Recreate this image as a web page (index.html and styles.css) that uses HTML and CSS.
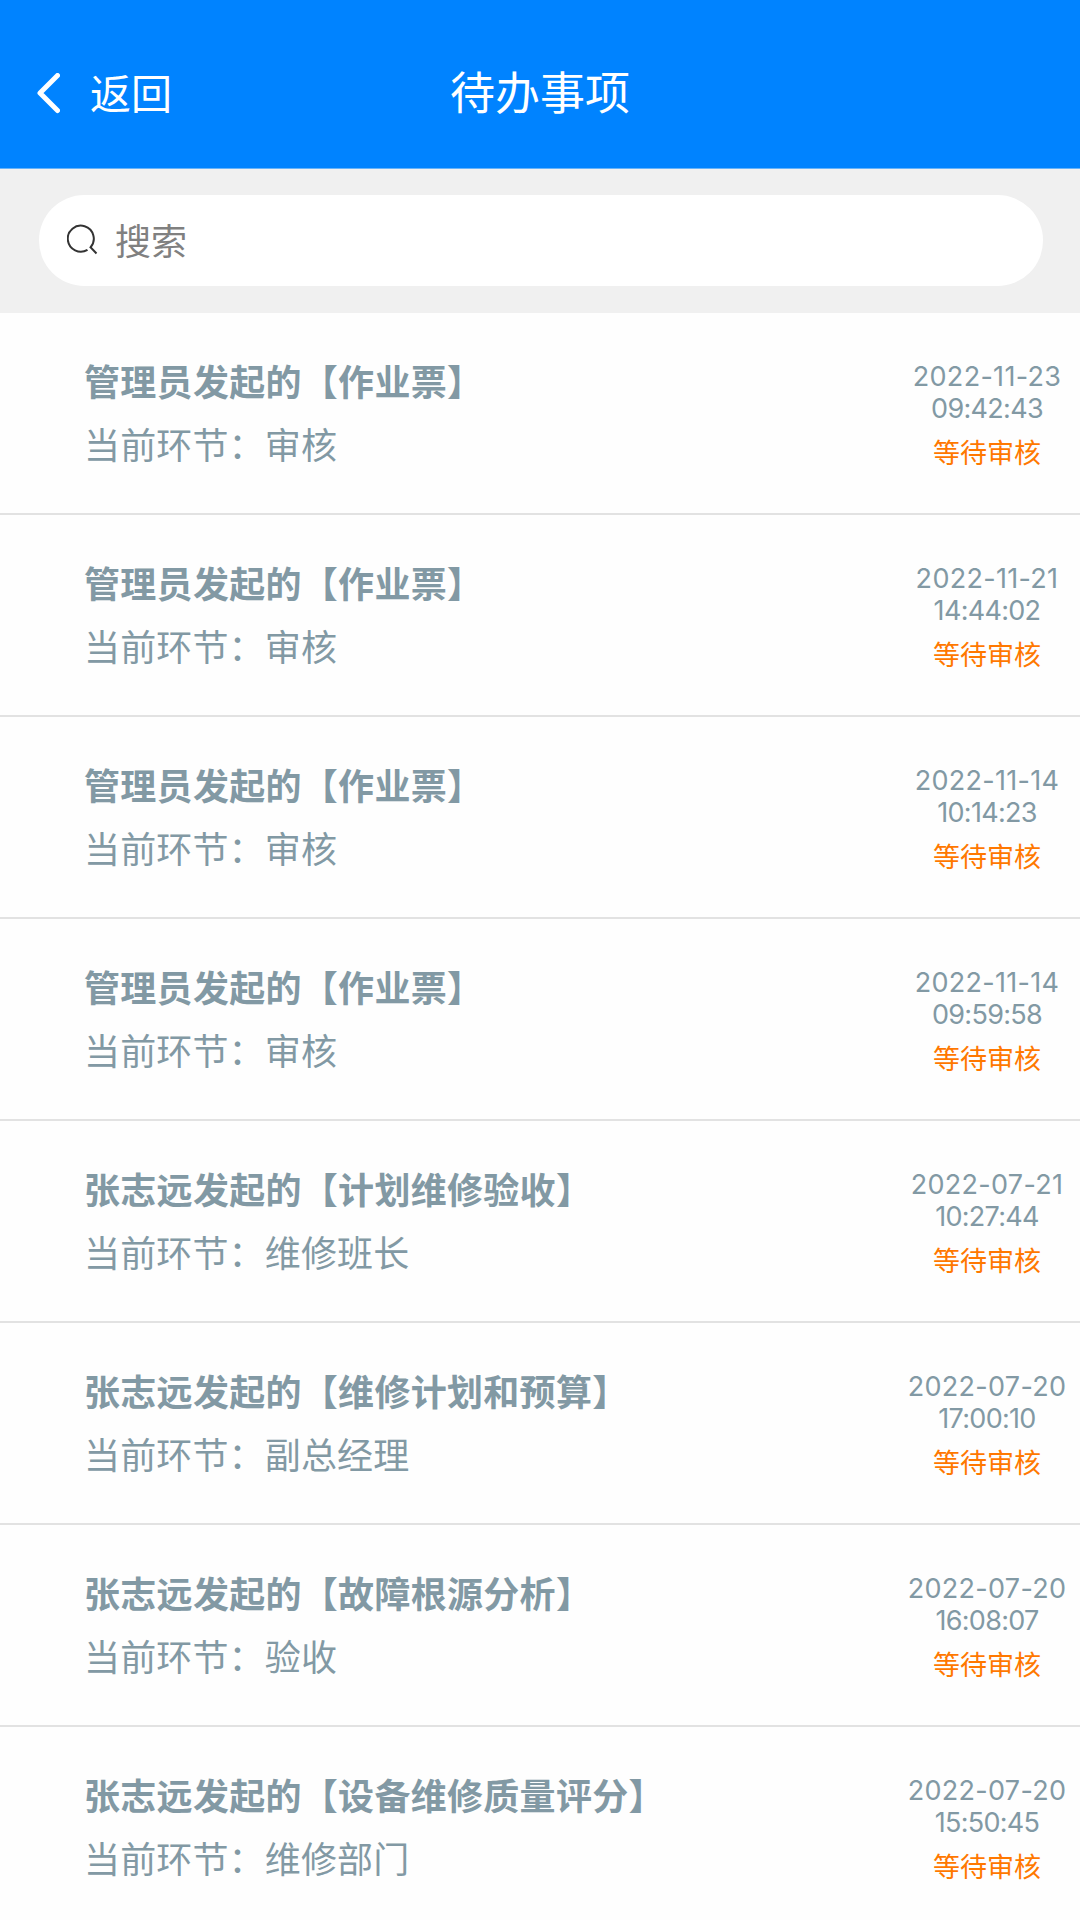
FILE: index.html
```
<!DOCTYPE html>
<html lang="zh-CN">
	<head>
		<meta charset="UTF-8" />
		<meta name="viewport" content="width=device-width, initial-scale=1.0" />
		<title>待办事项</title>
		<link rel="stylesheet" href="styles.css">
	</head>
	<body>
		<header class="navbar">
			<a class="back">
				<svg class="back-icon" width="24" height="42" viewBox="0 0 24 42">
					<path d="M21.5 2.5 L4 20 L21.5 37.5" />
				</svg>
				<span>返回</span>
			</a>
			<h1>待办事项</h1>
		</header>

		<div class="search-bar">
			<div class="search-box">
				<svg class="search-icon" width="32" height="32" viewBox="0 0 32 32">
					<path d="M20.5 26.8 A13 13 0 1 1 23.5 24.3 L29.5 30.5" />
				</svg>
				<span>搜索</span>
			</div>
		</div>

		<ul class="todo-list" id="todo-list"></ul>

		<script>
			const todoList = document.getElementById("todo-list");

			const todos = [
				{ user: "管理员", form: "作业票", step: "审核", date: "2022-11-23", time: "09:42:43" },
				{ user: "管理员", form: "作业票", step: "审核", date: "2022-11-21", time: "14:44:02" },
				{ user: "管理员", form: "作业票", step: "审核", date: "2022-11-14", time: "10:14:23" },
				{ user: "管理员", form: "作业票", step: "审核", date: "2022-11-14", time: "09:59:58" },
				{ user: "张志远", form: "计划维修验收", step: "维修班长", date: "2022-07-21", time: "10:27:44" },
				{ user: "张志远", form: "维修计划和预算", step: "副总经理", date: "2022-07-20", time: "17:00:10" },
				{ user: "张志远", form: "故障根源分析", step: "验收", date: "2022-07-20", time: "16:08:07" },
				{ user: "张志远", form: "设备维修质量评分", step: "维修部门", date: "2022-07-20", time: "15:50:45" },
			];

			todos.forEach((todo) => {
				const item = document.createElement("li");
				item.classList.add("todo");
				item.innerHTML = `
					<div class="info">
						<div class="title">${todo.user}发起的【${todo.form}】</div>
						<div class="step">当前环节：${todo.step}</div>
					</div>
					<div class="meta">
						<div class="date">${todo.date}</div>
						<div class="time">${todo.time}</div>
						<div class="status">等待审核</div>
					</div>`;
				todoList.appendChild(item);
			});
		</script>
	</body>
</html>
```
FILE: styles.css
```
* {
	box-sizing: border-box;
}

body {
	font-family: Inter, "Noto Sans CJK SC", sans-serif;
	background-color: #fefefe;
	color: #8299a4;
	height: 1920px;
	margin: 0;
	overflow: hidden;
}

.navbar {
	display: grid;
	grid-template-columns: 1fr auto 1fr;
	align-items: center;
	height: 169px;
	padding: 19px 36px 0;
	background-color: #0083ff;
	border-bottom: 1px solid #66b3fa;
	color: white;
}

.navbar h1 {
	margin: 0;
	font-size: 45px;
	font-weight: 400;
	line-height: 60px;
}

.back {
	display: flex;
	align-items: center;
	gap: 30px;
	font-size: 41px;
	line-height: 60px;
}

.back-icon {
	fill: none;
	stroke: white;
	stroke-width: 5;
	stroke-linecap: round;
	stroke-linejoin: round;
}

.search-bar {
	height: 144px;
	padding: 26px 37px 27px 39px;
	background-color: #f0f0f0;
}

.search-box {
	display: flex;
	align-items: center;
	gap: 16px;
	height: 91px;
	padding: 0 0 3px 28px;
	background-color: white;
	border-radius: 46px;
	color: #808080;
	font-size: 36px;
}

.search-icon {
	fill: none;
	stroke: #333;
	stroke-width: 2;
}

.todo-list {
	margin: 0;
	padding: 0;
	list-style: none;
}

.todo {
	display: flex;
	justify-content: space-between;
	height: 202px;
	padding-left: 84px;
	border-bottom: 2px solid #e2e2e2;
}

.info {
	padding-top: 39px;
	font-size: 36px;
	line-height: 63px;
}

.title {
	font-weight: 700;
	letter-spacing: 0.3px;
}

.step {
	letter-spacing: 0.15px;
}

.meta {
	width: 187px;
	padding-top: 48px;
	text-align: center;
}

.date,
.time {
	font-size: 27px;
	line-height: 32px;
}

.date {
	margin-right: -1px;
	letter-spacing: 0.3px;
	white-space: nowrap;
}

.time {
	margin-right: -1px;
	letter-spacing: -0.7px;
}

.status {
	margin: 9px -1px 0 0;
	color: #ff7800;
	font-size: 27px;
	line-height: 40px;
}
```
